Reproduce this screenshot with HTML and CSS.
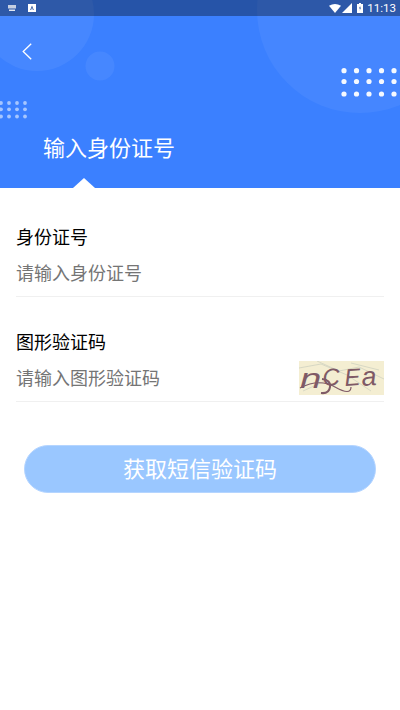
FILE: index.html
```html
<!DOCTYPE html>
<html lang="zh">
<head>
<meta charset="utf-8">
<title>输入身份证号</title>
<link rel="stylesheet" href="styles.css">
</head>
<body>
<header class="header">
  <svg class="deco" width="400" height="172" viewBox="0 0 400 172" aria-hidden="true">
    <circle cx="37" cy="14" r="57" fill="#fff" fill-opacity=".06"/>
    <circle cx="100" cy="66" r="14.5" fill="#fff" fill-opacity=".06"/>
    <circle cx="360" cy="10" r="103" fill="#fff" fill-opacity=".05"/>
    <g fill="#fff" fill-opacity=".95">
      <circle cx="344" cy="70.7" r="2.6"/><circle cx="356.5" cy="70.7" r="2.6"/><circle cx="369" cy="70.7" r="2.6"/><circle cx="381.5" cy="70.7" r="2.6"/><circle cx="394" cy="70.7" r="2.6"/>
      <circle cx="344" cy="81.5" r="2.6"/><circle cx="356.5" cy="81.5" r="2.6"/><circle cx="369" cy="81.5" r="2.6"/><circle cx="381.5" cy="81.5" r="2.6"/><circle cx="394" cy="81.5" r="2.6"/>
      <circle cx="344" cy="94" r="2.6"/><circle cx="356.5" cy="94" r="2.6"/><circle cx="369" cy="94" r="2.6"/><circle cx="381.5" cy="94" r="2.6"/><circle cx="394" cy="94" r="2.6"/>
    </g>
    <g fill="#fff" fill-opacity=".55">
      <circle cx="1" cy="103" r="1.9"/><circle cx="9" cy="103" r="1.9"/><circle cx="17" cy="103" r="1.9"/><circle cx="25" cy="103" r="1.9"/>
      <circle cx="1" cy="109.3" r="1.9"/><circle cx="9" cy="109.3" r="1.9"/><circle cx="17" cy="109.3" r="1.9"/><circle cx="25" cy="109.3" r="1.9"/>
      <circle cx="1" cy="116.5" r="1.9"/><circle cx="9" cy="116.5" r="1.9"/><circle cx="17" cy="116.5" r="1.9"/><circle cx="25" cy="116.5" r="1.9"/>
    </g>
  </svg>
  <div class="statusbar">
    <div class="status-left">
      <svg width="10" height="6" viewBox="0 0 10 6" aria-hidden="true"><path d="M1 0h8v3.5H1z" fill="#c5cfe2"/><path d="M2 4.5h6V6H2z" fill="#e3e8f2"/></svg>
      <svg width="8" height="8" viewBox="0 0 8 8" aria-hidden="true"><path d="M0 0h8v8H0z" fill="#fff"/><path d="M4 1.4 5.8 6H4.9L4 3.6 3.1 6H2.2z" fill="#27509b"/></svg>
    </div>
    <div class="status-right">
      <svg width="12" height="9" viewBox="0 0 12 9" aria-hidden="true"><path d="M0 1.8Q6-1.6 12 1.8L6 9z" fill="#fff"/></svg>
      <svg width="10" height="10" viewBox="0 0 10 10" aria-hidden="true"><path d="M10 0v10H0z" fill="#fff"/></svg>
      <svg class="battery" width="6" height="10" viewBox="0 0 6 10" aria-hidden="true"><path d="M2 0h2v1h2v9H0V1h2z" fill="#fff"/><path d="M3.4 2.4 2 5.6h1.1L2.6 8 4 4.6H3z" fill="#27509b"/></svg>
      <span class="clock">11:13</span>
    </div>
  </div>
  <div class="navbar">
    <svg width="10" height="17" viewBox="0 0 10 17" aria-hidden="true"><path d="M9.2.7 1.2 8.5l8 7.8" fill="none" stroke="#fff" stroke-width="1.3"/></svg>
  </div>
  <h1 class="title">输入身份证号</h1>
  <span class="notch"></span>
</header>
<main class="form">
  <section class="field">
    <div class="label">身份证号</div>
    <div class="row"><span class="placeholder">请输入身份证号</span></div>
  </section>
  <section class="field field-captcha">
    <div class="label">图形验证码</div>
    <div class="row">
      <span class="placeholder">请输入图形验证码</span>
      <svg class="captcha" width="85" height="34" viewBox="0 0 85 34" role="img" aria-label="验证码">
        <rect width="85" height="34" fill="#f4eed2"/>
        <path d="M0 7 22 3 48 14 72 30M18 0 40 10 60 6 85 18M4 30 26 20M52 2 80 9" fill="none" stroke="#cfd2c0" stroke-width=".8"/>
        <path d="M1 27Q20 17 36 26T52 26" fill="none" stroke="#7f5a66" stroke-width="1.2"/>
        <path d="M22 32Q30 33 31 26T23 18" fill="none" stroke="#7f5a66" stroke-width="2"/>
        <text class="captcha-text" transform="translate(1 27) scale(1.6 1.12)">n</text>
        <text class="captcha-text" x="24" y="25" transform="rotate(-4 24 25)">C</text>
        <text class="captcha-text" x="46" y="25" transform="rotate(-4 46 25)">E</text>
        <text class="captcha-text captcha-a" x="63" y="25" transform="rotate(-4 63 25)">a</text>
      </svg>
    </div>
  </section>
  <button class="submit" type="button">获取短信验证码</button>
</main>
</body>
</html>
```
FILE: styles.css
```css
* { box-sizing: border-box; }
html, body { margin: 0; padding: 0; }
body {
  width: 400px;
  height: 710px;
  overflow: hidden;
  background: #fff;
  font-family: "Noto Sans CJK SC", "Noto Sans", sans-serif;
}
.header {
  position: relative;
  height: 188px;
  background: #3b80ff;
  overflow: hidden;
}
.deco { position: absolute; left: 0; top: 0; }
.statusbar {
  position: relative;
  height: 16px;
  background: rgba(0, 0, 0, .34);
  display: flex;
  justify-content: space-between;
  align-items: center;
  padding: 0 4px 0 7px;
}
.status-left { display: flex; align-items: center; gap: 11px; }
.status-right { display: flex; align-items: center; gap: 1px; color: #fff; }
.battery { margin-left: 4px; }
.clock {
  margin-left: 3px;
  font: 11.5px/16px Roboto, sans-serif;
}
.navbar { position: relative; padding: 27px 0 0 22px; height: 44px; display: flex; }
.title {
  position: relative;
  margin: 0;
  padding: 70px 0 0 43px;
  font-size: 22px;
  line-height: 32px;
  font-weight: 400;
  color: #fff;
}
.notch {
  position: absolute;
  left: 73px;
  bottom: 0;
  width: 0;
  height: 0;
  border-left: 11px solid transparent;
  border-right: 11px solid transparent;
  border-bottom: 10px solid #fff;
}
.form { padding: 35px 16px 0; }
.field { height: 74px; }
.field-captcha { margin-top: 31px; }
.label {
  font-size: 18px;
  line-height: 26px;
  color: #000;
}
.row {
  height: 48px;
  border-bottom: 1px solid #f0f0f0;
  display: flex;
  justify-content: space-between;
  align-items: center;
  padding-bottom: 1px;
}
.placeholder { font-size: 18px; line-height: 26px; color: #757575; }
.captcha { display: block; margin-top: 1px; }
.captcha-text {
  font-family: "Liberation Sans", sans-serif;
  font-size: 24px;
  font-style: italic;
  fill: #7f5a66;
}
.captcha-a { font-size: 27px; }
.submit {
  display: block;
  width: 352px;
  height: 48px;
  margin: 43px 0 0 8px;
  padding: 0 0 4px;
  border: 1px solid #b5d5ff;
  border-radius: 24px;
  background: #9ac7ff;
  color: #fff;
  font: inherit;
  font-size: 22px;
  text-align: center;
}
```
